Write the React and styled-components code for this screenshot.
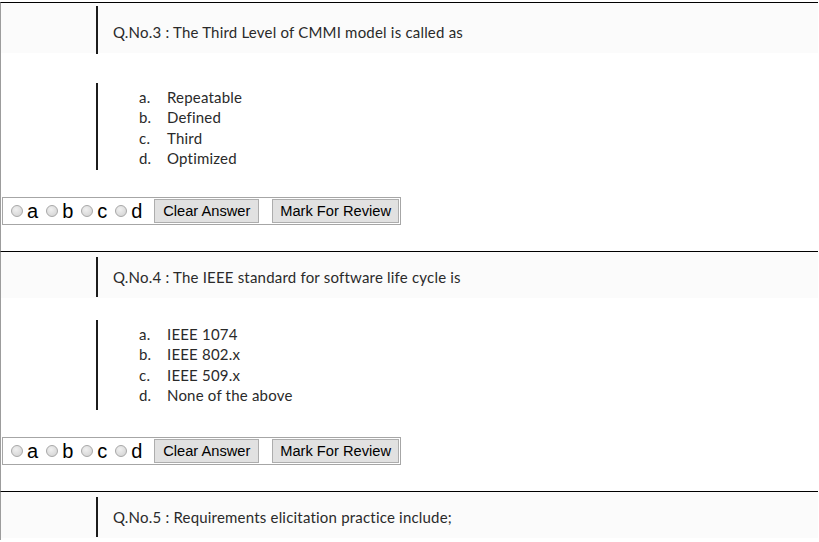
import styled, { createGlobalStyle } from 'styled-components'

const questions = [
  {
    no: 3,
    text: 'The Third Level of CMMI model is called as',
    options: ['Repeatable', 'Defined', 'Third', 'Optimized'],
    q: { height: 52, barTop: 3, barHeight: 48, textShift: 4 },
    gap: 2,
    opt: { top: 26, height: 87 },
    boxGap: 27,
    bottom: 26,
  },
  {
    no: 4,
    text: 'The IEEE standard for software life cycle is',
    options: ['IEEE 1074', 'IEEE 802.x', 'IEEE 509.x', 'None of the above'],
    q: { height: 48, barTop: 5, barHeight: 40, textShift: 0 },
    gap: 4,
    opt: { top: 16, height: 90 },
    boxGap: 27,
    bottom: 26,
  },
  {
    no: 5,
    text: 'Requirements elicitation practice include;',
    options: [],
    q: { height: 48, barTop: 5, barHeight: 40, textShift: 0 },
  },
]

export default function App() {
  return (
    <Page>
      <GlobalStyle />
      {questions.map((item) => (
        <Block key={item.no} $bottom={item.bottom || 0}>
          <QuestionImage $height={item.q.height} $barTop={item.q.barTop} $barHeight={item.q.barHeight}>
            <Bar />
            <QuestionText $shift={item.q.textShift}>Q.No.{item.no} : {item.text}</QuestionText>
          </QuestionImage>
          {item.options.length > 0 && (
            <>
              <OptionsImage $gap={item.gap} $top={item.opt.top} $height={item.opt.height}>
                <Bar />
                <OptionList>
                  {item.options.map((opt, i) => (
                    <Option key={opt}>
                      <Marker>{'abcd'[i]}.</Marker>
                      {opt}
                    </Option>
                  ))}
                </OptionList>
              </OptionsImage>
              <AnswerBox $gap={item.boxGap}>
                <Choices>
                  {['a', 'b', 'c', 'd'].map((c) => (
                    <Choice key={c}>
                      <Radio type="radio" name={`q${item.no}`} />
                      {c}
                    </Choice>
                  ))}
                </Choices>
                <Button $width={105}>Clear Answer</Button>
                <Button $width={127}>Mark For Review</Button>
              </AnswerBox>
            </>
          )}
        </Block>
      ))}
    </Page>
  )
}

const GlobalStyle = createGlobalStyle`
  body {
    margin: 0;
    background: #fff;
  }
`

const Page = styled.div`
  width: 819px;
  padding-top: 2px;
`

const Block = styled.section`
  border-top: 1px solid #000;
  border-left: 1px solid #9c9c9c;
  margin-right: 1px;
  padding-bottom: ${({ $bottom }) => $bottom}px;
`

const Bar = styled.div`
  width: 2px;
  align-self: stretch;
  background: #1c1c1c;
  flex-shrink: 0;
`

const QuestionImage = styled.div`
  height: ${({ $height }) => $height}px;
  background: linear-gradient(#fbfbfb, #fbfbfb) top / 100% ${({ $height }) => $height - 2}px no-repeat;
  display: flex;
  align-items: center;
  padding: ${({ $barTop }) => $barTop}px 0 ${({ $height, $barTop, $barHeight }) => Math.max(0, $height - $barTop - $barHeight)}px 95px;
  box-sizing: border-box;
  gap: 15px;
`

const QuestionText = styled.div`
  font-family: Lato, 'Open Sans', sans-serif;
  font-size: 15px;
  letter-spacing: 0.2px;
  color: #2a2a2a;
  padding-top: ${({ $shift }) => $shift}px;
`

const OptionsImage = styled.div`
  margin-top: ${({ $gap }) => $gap}px;
  padding: ${({ $top }) => $top}px 0 0 95px;
  display: flex;
  & > div:first-child {
    height: ${({ $height }) => $height}px;
  }
`

const OptionList = styled.ol`
  list-style: none;
  margin: 0;
  padding: 4px 0 0 41px;
  font-family: Lato, 'Open Sans', sans-serif;
  font-size: 15px;
  letter-spacing: 0.2px;
  line-height: 20.3px;
  color: #2a2a2a;
`

const Option = styled.li`
  display: flex;
`

const Marker = styled.span`
  width: 28px;
`

const AnswerBox = styled.div`
  margin: ${({ $gap }) => $gap}px 0 0 1px;
  width: 399px;
  height: 28px;
  box-sizing: border-box;
  border: 1px solid #a6a6a6;
  display: flex;
  align-items: center;
  padding-left: 7px;
  gap: 12px;
  font-family: Arial, 'Liberation Sans', sans-serif;
`

const Choices = styled.div`
  display: flex;
  align-items: center;
  gap: 7px;
  font-size: 20px;
  color: #000;
`

const Choice = styled.label`
  display: flex;
  align-items: center;
  gap: 4px;
`

const Radio = styled.input`
  appearance: none;
  margin: 0 0 0 1px;
  width: 12px;
  height: 12px;
  border-radius: 50%;
  border: 1px solid #a8a8a8;
  background: radial-gradient(circle at 40% 35%, #f0f0f0 0%, #d6d6d6 80%);
  box-sizing: border-box;
`

const Button = styled.button`
  width: ${({ $width }) => $width}px;
  height: 24px;
  padding: 0;
  margin-right: 1px;
  font-family: Arial, 'Liberation Sans', sans-serif;
  font-size: 14.67px;
  color: #000;
  background: #e1e1e1;
  border: 1px solid #adadad;
  border-radius: 0;
`
